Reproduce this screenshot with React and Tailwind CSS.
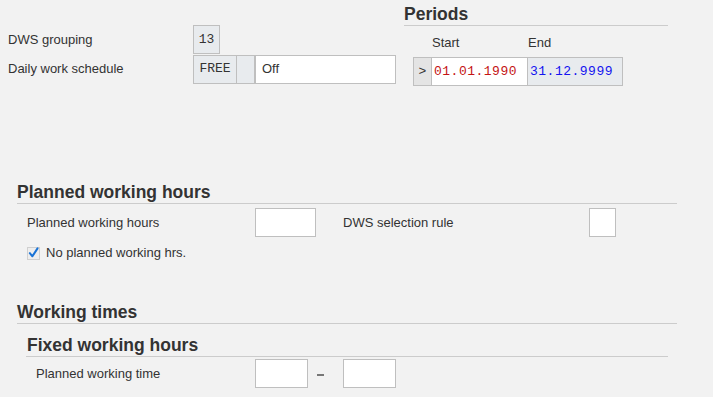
import React from 'react';

const font = { fontFamily: '"Liberation Sans", Arial, sans-serif' };

function Heading({ children, className = '' }) {
  return (
    <div
      className={`border-b border-[#cccccc] pb-[1px] text-[17.5px] font-bold leading-[20px] text-[#333333] ${className}`}
    >
      {children}
    </div>
  );
}

// input-like field; pass the fill colour in className
function Box({ className = '', children }) {
  return (
    <div
      className={`flex h-[29px] shrink-0 items-center border border-[#bfbfbf] text-[13px] ${className}`}
    >
      {children}
    </div>
  );
}

export default function App() {
  return (
    <div
      style={font}
      className="h-[397px] w-[713px] overflow-hidden bg-[#f2f2f2] text-[13px] text-[#333333]"
    >
      {/* top area */}
      <div className="flex h-[182px]">
        <div className="w-[396px] pl-[8px] pt-[25px]">
          <div className="flex h-[29px] items-center">
            <div className="w-[185px]">DWS grouping</div>
            <Box className="w-[27px] justify-center bg-[#e8ebee] font-mono">13</Box>
          </div>
          <div className="flex h-[30px] items-center">
            <div className="w-[185px]">Daily work schedule</div>
            <Box className="w-[44px] justify-center bg-[#e8ebee] font-mono">FREE</Box>
            <Box className="w-[18px] border-l-0 bg-[#e8ebee]" />
            <Box className="w-[141px] bg-white pl-[6px]">Off</Box>
          </div>
        </div>
        <div className="ml-[8px] w-[264px]">
          <Heading className="mt-[4px]">Periods</Heading>
          <div className="mt-[9px] flex pl-[28px] leading-[16px]">
            <div className="w-[96px]">Start</div>
            <div>End</div>
          </div>
          <div className="mt-[6px] flex pl-[9px]">
            <Box className="w-[19px] justify-center bg-[#e4e4e4] font-mono text-[#333]">&gt;</Box>
            <Box className="w-[96px] border-l-0 bg-white pl-[2px] font-mono tracking-[0.5px] text-[#c41414]">
              01.01.1990
            </Box>
            <Box className="w-[95px] border-l-0 bg-[#e8ebee] pl-[2px] font-mono tracking-[0.5px] text-[#1414f0]">
              31.12.9999
            </Box>
          </div>
        </div>
      </div>

      {/* planned working hours */}
      <div className="ml-[17px] w-[660px]">
        <Heading>Planned working hours</Heading>
      </div>
      <div className="mt-[4px] flex h-[29px] items-center pl-[27px]">
        <div className="w-[228px]">Planned working hours</div>
        <Box className="w-[61px] bg-white" />
        <div className="ml-[27px] w-[246px]">DWS selection rule</div>
        <Box className="w-[27px] bg-white" />
      </div>
      <div className="mt-[8px] flex h-[16px] items-center pl-[27px]">
        <div className="flex h-[13px] w-[13px] items-center justify-center border border-[#d0d0d0] bg-[#eeeeee]">
          <svg width="12" height="12" viewBox="0 0 12 12">
            <path
              d="M2 6.2 L4.8 9.6 L10.4 1"
              fill="none"
              stroke="#1a73d6"
              strokeWidth="2.2"
              strokeLinecap="round"
              strokeLinejoin="round"
            />
          </svg>
        </div>
        <div className="ml-[6px]">No planned working hrs.</div>
      </div>

      {/* working times */}
      <div className="ml-[17px] mt-[41px] w-[660px]">
        <Heading>Working times</Heading>
      </div>
      <div className="ml-[26px] mt-[11px] w-[642px]">
        <Heading className="pl-[1px]">Fixed working hours</Heading>
      </div>
      <div className="mt-[2px] flex h-[29px] items-center pl-[36px]">
        <div className="w-[219px]">Planned working time</div>
        <Box className="w-[53px] bg-white" />
        <div className="ml-[9px] mr-[19px] mt-[3px] h-[2px] w-[7px] bg-[#777777]" />
        <Box className="w-[53px] bg-white" />
      </div>
    </div>
  );
}
